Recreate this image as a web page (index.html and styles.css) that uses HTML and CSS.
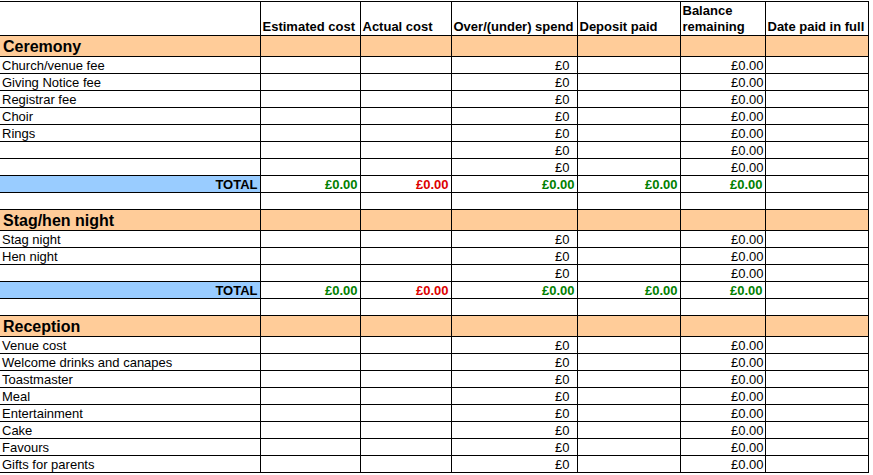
FILE: index.html
```html
<!DOCTYPE html>
<html>
<head>
<meta charset="utf-8">
<link rel="stylesheet" href="styles.css">
</head>
<body>
<table class="sheet">
  <colgroup>
    <col class="c-a"><col class="c-b"><col class="c-c"><col class="c-d"><col class="c-e"><col class="c-f"><col class="c-g">
  </colgroup>
  <tr class="head">
    <td></td><td>Estimated cost</td><td>Actual cost</td><td>Over/(under) spend</td><td>Deposit paid</td><td>Balance remaining</td><td>Date paid in full</td>
  </tr>
  <tr class="section"><td>Ceremony</td><td></td><td></td><td></td><td></td><td></td><td></td></tr>
  <tr class="row"><td>Church/venue fee</td><td></td><td></td><td class="num spend">£0</td><td></td><td class="num bal">£0.00</td><td></td></tr>
  <tr class="row"><td>Giving Notice fee</td><td></td><td></td><td class="num spend">£0</td><td></td><td class="num bal">£0.00</td><td></td></tr>
  <tr class="row"><td>Registrar fee</td><td></td><td></td><td class="num spend">£0</td><td></td><td class="num bal">£0.00</td><td></td></tr>
  <tr class="row"><td>Choir</td><td></td><td></td><td class="num spend">£0</td><td></td><td class="num bal">£0.00</td><td></td></tr>
  <tr class="row"><td>Rings</td><td></td><td></td><td class="num spend">£0</td><td></td><td class="num bal">£0.00</td><td></td></tr>
  <tr class="row"><td></td><td></td><td></td><td class="num spend">£0</td><td></td><td class="num bal">£0.00</td><td></td></tr>
  <tr class="row"><td></td><td></td><td></td><td class="num spend">£0</td><td></td><td class="num bal">£0.00</td><td></td></tr>
  <tr class="row total"><td class="total-label">TOTAL</td><td class="num green">£0.00</td><td class="num red">£0.00</td><td class="num green">£0.00</td><td class="num green">£0.00</td><td class="num green">£0.00</td><td></td></tr>
  <tr class="row"><td></td><td></td><td></td><td></td><td></td><td></td><td></td></tr>
  <tr class="section"><td>Stag/hen night</td><td></td><td></td><td></td><td></td><td></td><td></td></tr>
  <tr class="row"><td>Stag night</td><td></td><td></td><td class="num spend">£0</td><td></td><td class="num bal">£0.00</td><td></td></tr>
  <tr class="row"><td>Hen night</td><td></td><td></td><td class="num spend">£0</td><td></td><td class="num bal">£0.00</td><td></td></tr>
  <tr class="row"><td></td><td></td><td></td><td class="num spend">£0</td><td></td><td class="num bal">£0.00</td><td></td></tr>
  <tr class="row total"><td class="total-label">TOTAL</td><td class="num green">£0.00</td><td class="num red">£0.00</td><td class="num green">£0.00</td><td class="num green">£0.00</td><td class="num green">£0.00</td><td></td></tr>
  <tr class="row"><td></td><td></td><td></td><td></td><td></td><td></td><td></td></tr>
  <tr class="section"><td>Reception</td><td></td><td></td><td></td><td></td><td></td><td></td></tr>
  <tr class="row"><td>Venue cost</td><td></td><td></td><td class="num spend">£0</td><td></td><td class="num bal">£0.00</td><td></td></tr>
  <tr class="row"><td>Welcome drinks and canapes</td><td></td><td></td><td class="num spend">£0</td><td></td><td class="num bal">£0.00</td><td></td></tr>
  <tr class="row"><td>Toastmaster</td><td></td><td></td><td class="num spend">£0</td><td></td><td class="num bal">£0.00</td><td></td></tr>
  <tr class="row"><td>Meal</td><td></td><td></td><td class="num spend">£0</td><td></td><td class="num bal">£0.00</td><td></td></tr>
  <tr class="row"><td>Entertainment</td><td></td><td></td><td class="num spend">£0</td><td></td><td class="num bal">£0.00</td><td></td></tr>
  <tr class="row"><td>Cake</td><td></td><td></td><td class="num spend">£0</td><td></td><td class="num bal">£0.00</td><td></td></tr>
  <tr class="row"><td>Favours</td><td></td><td></td><td class="num spend">£0</td><td></td><td class="num bal">£0.00</td><td></td></tr>
  <tr class="row"><td>Gifts for parents</td><td></td><td></td><td class="num spend">£0</td><td></td><td class="num bal">£0.00</td><td></td></tr>
</table>
</body>
</html>
```

FILE: styles.css
```css
html, body {
  margin: 0;
  padding: 0;
  background: #ffffff;
}

body {
  padding-top: 1px;
  font-family: "Liberation Sans", Arial, sans-serif;
  font-size: 13px;
  color: #000000;
}

.sheet {
  border-collapse: collapse;
  table-layout: fixed;
  width: 868px;
}

.c-a { width: 260px; }
.c-b { width: 100px; }
.c-c { width: 91px; }
.c-d { width: 126px; }
.c-e { width: 103px; }
.c-f { width: 85px; }
.c-g { width: 103px; }

.sheet td {
  border: 1px solid #000000;
  padding: 0 2px 0 2px;
  white-space: nowrap;
  overflow: hidden;
  line-height: 15px;
  vertical-align: bottom;
}

.sheet tr td:first-child {
  border-left: none;
}

.head td {
  height: 33px;
  font-weight: bold;
  white-space: normal;
  line-height: 16px;
  padding-bottom: 0;
}

.row td {
  height: 16px;
}

.section td {
  height: 20px;
  background: #ffcc99;
}

.section td:first-child {
  font-size: 16px;
  font-weight: bold;
  line-height: 19px;
  padding-left: 3px;
}

.num {
  text-align: right;
}

.sheet td.spend {
  padding-right: 7px;
}

.sheet td.bal {
  padding-right: 1px;
}

.total-label {
  background: #99ccff;
  font-weight: bold;
  text-align: right;
}

.green {
  color: #008000;
  font-weight: bold;
}

.red {
  color: #dd0000;
  font-weight: bold;
}
```
